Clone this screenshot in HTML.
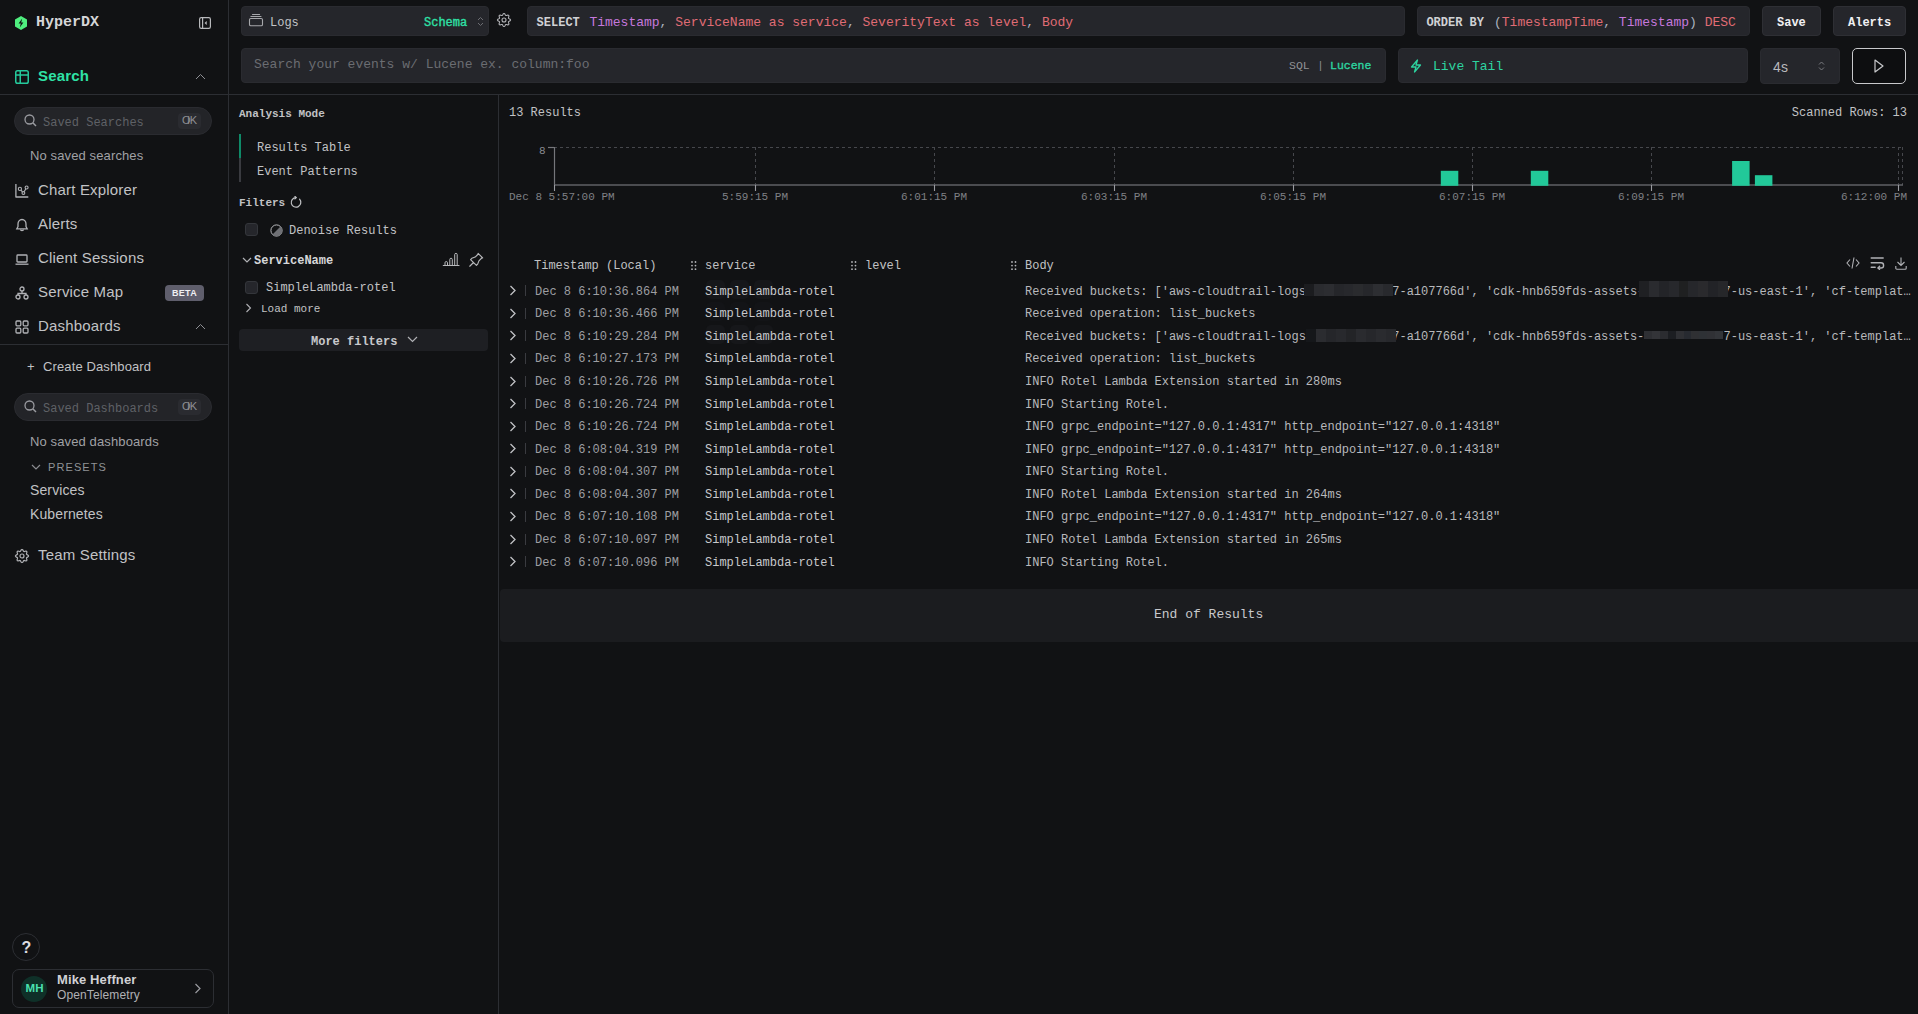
<!DOCTYPE html>
<html><head><meta charset="utf-8"><title>HyperDX</title>
<style>
html,body{margin:0;padding:0;width:1918px;height:1014px;overflow:hidden;background:#111214;font-family:"Liberation Sans",sans-serif}
</style></head><body>
<div style="position:absolute;left:228px;top:0px;width:1px;height:1014px;box-sizing:border-box;background:#2c2e33"></div>
<div style="position:absolute;left:0px;top:94px;width:228px;height:1px;box-sizing:border-box;background:#2c2e33"></div>
<svg style="position:absolute;left:15px;top:16px;" width="12" height="14" viewBox="0 0 12 14" fill="none"><path d="M6 0 L12 3.5 L12 10.5 L6 14 L0 10.5 L0 3.5 Z" fill="#4fef7f"/><path d="M7.2 2.6 L3.6 7.6 L5.8 7.6 L4.8 11.4 L8.4 6.4 L6.2 6.4 Z" fill="#111214"/></svg>
<div style="position:absolute;left:36.00px;top:7.75px;line-height:30px;font-family:'Liberation Mono', monospace;font-size:15px;font-weight:700;color:#d5d6d8;white-space:pre;">HyperDX</div>
<svg style="position:absolute;left:199px;top:17px;" width="12" height="12" viewBox="0 0 12 12" fill="none"><rect x="0.6" y="0.6" width="10.8" height="10.8" rx="1.6" stroke="#b8b9bc" stroke-width="1.2"/><path d="M3.6 1 V11" stroke="#b8b9bc" stroke-width="1.2"/><path d="M7.8 4.6 L6.4 6 L7.8 7.4" stroke="#b8b9bc" stroke-width="1.2"/></svg>
<svg style="position:absolute;left:15px;top:70px;" width="14" height="14" viewBox="0 0 14 14" fill="none"><rect x="0.75" y="0.75" width="12.5" height="12.5" rx="1.8" stroke="#25c99b" stroke-width="1.5"/><path d="M0.75 5 H13.25 M5.25 0.75 V13.25" stroke="#25c99b" stroke-width="1.5"/></svg>
<div style="position:absolute;left:38.00px;top:61.40px;line-height:30px;font-family:'Liberation Sans', sans-serif;font-size:15px;font-weight:700;color:#2fe2a6;white-space:pre;letter-spacing:0.18px;">Search</div>
<svg style="position:absolute;left:195px;top:72.5px;" width="11" height="7" viewBox="0 0 11 7" fill="none"><path d="M1 6 L5.5 1.5 L10 6" stroke="#8e8f94" stroke-width="1"/></svg>
<div style="position:absolute;left:14px;top:107px;width:198px;height:28px;box-sizing:border-box;background:#232428;border-radius:14px;border:1px solid #2a2b30"></div>
<svg style="position:absolute;left:24px;top:114px;" width="13" height="13" viewBox="0 0 13 13" fill="none"><circle cx="5.5" cy="5.5" r="4.5" stroke="#9a9ba0" stroke-width="1.3"/><path d="M8.8 8.8 L12 12" stroke="#9a9ba0" stroke-width="1.5"/></svg>
<div style="position:absolute;left:43.00px;top:110.90px;line-height:24px;font-family:'Liberation Mono', monospace;font-size:12px;font-weight:400;color:#5f6166;white-space:pre;">Saved Searches</div>
<div style="position:absolute;left:178px;top:113px;width:23px;height:16px;box-sizing:border-box;background:#2a2b30;border-radius:4px"></div>
<div style="position:absolute;left:182.00px;top:108.96px;line-height:22px;font-family:'Liberation Sans', sans-serif;font-size:11px;font-weight:400;color:#8e8f94;white-space:pre;letter-spacing:0.12px;"><span>O</span><span style="margin-left:-3.5px">i</span>K</div>
<div style="position:absolute;left:30.00px;top:142.68px;line-height:26px;font-family:'Liberation Sans', sans-serif;font-size:13px;font-weight:400;color:#a0a1a5;white-space:pre;letter-spacing:0.12px;">No saved searches</div>
<svg style="position:absolute;left:12px;top:182px;" width="20" height="18" viewBox="0 0 20 18" fill="none"><path d="M3.9 2 V15 H16.3" stroke="#b0b1b5" stroke-width="1.3" stroke-linejoin="round"/><path d="M7.9 6.9 L11.4 11 L14.6 5.5" stroke="#b0b1b5" stroke-width="1.2"/><circle cx="7.9" cy="6.9" r="1.6" fill="#111214" stroke="#b0b1b5" stroke-width="1.1"/><circle cx="11.4" cy="11" r="1.4" fill="#111214" stroke="#b0b1b5" stroke-width="1.1"/><circle cx="14.6" cy="5.5" r="1.5" fill="#111214" stroke="#b0b1b5" stroke-width="1.1"/></svg>
<div style="position:absolute;left:38.00px;top:175.40px;line-height:30px;font-family:'Liberation Sans', sans-serif;font-size:15px;font-weight:400;color:#c1c2c5;white-space:pre;letter-spacing:0.18px;">Chart Explorer</div>
<svg style="position:absolute;left:15px;top:218px;" width="14" height="14" viewBox="0 0 14 14" fill="none"><path d="M7 1.5 C4.5 1.5 3 3.5 3 6 V8.5 L1.8 10.8 H12.2 L11 8.5 V6 C11 3.5 9.5 1.5 7 1.5 Z" stroke="#b0b1b5" stroke-width="1.3"/><path d="M5.5 11.5 C5.5 13 8.5 13 8.5 11.5" stroke="#b0b1b5" stroke-width="1.3"/></svg>
<div style="position:absolute;left:38.00px;top:209.40px;line-height:30px;font-family:'Liberation Sans', sans-serif;font-size:15px;font-weight:400;color:#c1c2c5;white-space:pre;letter-spacing:0.18px;">Alerts</div>
<svg style="position:absolute;left:15px;top:252px;" width="14" height="14" viewBox="0 0 14 14" fill="none"><rect x="2" y="3" width="10" height="7" rx="0.8" stroke="#b0b1b5" stroke-width="1.3"/><path d="M0.5 12.2 H13.5" stroke="#b0b1b5" stroke-width="1.3"/></svg>
<div style="position:absolute;left:38.00px;top:243.40px;line-height:30px;font-family:'Liberation Sans', sans-serif;font-size:15px;font-weight:400;color:#c1c2c5;white-space:pre;letter-spacing:0.18px;">Client Sessions</div>
<svg style="position:absolute;left:15px;top:286px;" width="14" height="14" viewBox="0 0 14 14" fill="none"><circle cx="7" cy="3" r="2" stroke="#b0b1b5" stroke-width="1.3"/><circle cx="3" cy="11" r="2" stroke="#b0b1b5" stroke-width="1.3"/><circle cx="11" cy="11" r="2" stroke="#b0b1b5" stroke-width="1.3"/><path d="M7 5 V7.5 M3 9 V7.5 H11 V9" stroke="#b0b1b5" stroke-width="1.3"/></svg>
<div style="position:absolute;left:38.00px;top:277.40px;line-height:30px;font-family:'Liberation Sans', sans-serif;font-size:15px;font-weight:400;color:#c1c2c5;white-space:pre;letter-spacing:0.18px;">Service Map</div>
<div style="position:absolute;left:165px;top:285px;width:39px;height:16px;box-sizing:border-box;background:#5f5e6c;border-radius:4px"></div>
<div style="position:absolute;left:172.00px;top:284.24px;line-height:18px;font-family:'Liberation Sans', sans-serif;font-size:9px;font-weight:700;color:#f0f0f2;white-space:pre;letter-spacing:0.3px">BETA</div>
<svg style="position:absolute;left:15px;top:320px;" width="14" height="14" viewBox="0 0 14 14" fill="none"><rect x="1" y="1" width="4.8" height="4.8" rx="1" stroke="#b0b1b5" stroke-width="1.3"/><rect x="8.2" y="1" width="4.8" height="4.8" rx="1" stroke="#b0b1b5" stroke-width="1.3"/><rect x="1" y="8.2" width="4.8" height="4.8" rx="1" stroke="#b0b1b5" stroke-width="1.3"/><rect x="8.2" y="8.2" width="4.8" height="4.8" rx="1" stroke="#b0b1b5" stroke-width="1.3"/></svg>
<div style="position:absolute;left:38.00px;top:311.40px;line-height:30px;font-family:'Liberation Sans', sans-serif;font-size:15px;font-weight:400;color:#c1c2c5;white-space:pre;letter-spacing:0.18px;">Dashboards</div>
<svg style="position:absolute;left:195px;top:322.5px;" width="11" height="7" viewBox="0 0 11 7" fill="none"><path d="M1 6 L5.5 1.5 L10 6" stroke="#8e8f94" stroke-width="1"/></svg>
<div style="position:absolute;left:0px;top:344px;width:228px;height:1px;box-sizing:border-box;background:#2c2e33"></div>
<div style="position:absolute;left:27.00px;top:353.68px;line-height:26px;font-family:'Liberation Sans', sans-serif;font-size:13px;font-weight:400;color:#c1c2c5;white-space:pre;letter-spacing:0.12px;">+</div>
<div style="position:absolute;left:43.00px;top:353.68px;line-height:26px;font-family:'Liberation Sans', sans-serif;font-size:13px;font-weight:400;color:#c1c2c5;white-space:pre;letter-spacing:0.12px;">Create Dashboard</div>
<div style="position:absolute;left:14px;top:393px;width:198px;height:28px;box-sizing:border-box;background:#232428;border-radius:14px;border:1px solid #2a2b30"></div>
<svg style="position:absolute;left:24px;top:400px;" width="13" height="13" viewBox="0 0 13 13" fill="none"><circle cx="5.5" cy="5.5" r="4.5" stroke="#9a9ba0" stroke-width="1.3"/><path d="M8.8 8.8 L12 12" stroke="#9a9ba0" stroke-width="1.5"/></svg>
<div style="position:absolute;left:43.00px;top:396.90px;line-height:24px;font-family:'Liberation Mono', monospace;font-size:12px;font-weight:400;color:#5f6166;white-space:pre;">Saved Dashboards</div>
<div style="position:absolute;left:178px;top:399px;width:23px;height:16px;box-sizing:border-box;background:#2a2b30;border-radius:4px"></div>
<div style="position:absolute;left:182.00px;top:394.96px;line-height:22px;font-family:'Liberation Sans', sans-serif;font-size:11px;font-weight:400;color:#8e8f94;white-space:pre;letter-spacing:0.12px;"><span>O</span><span style="margin-left:-3.5px">i</span>K</div>
<div style="position:absolute;left:30.00px;top:428.68px;line-height:26px;font-family:'Liberation Sans', sans-serif;font-size:13px;font-weight:400;color:#a0a1a5;white-space:pre;letter-spacing:0.12px;">No saved dashboards</div>
<svg style="position:absolute;left:31px;top:464px;" width="10" height="7" viewBox="0 0 10 7" fill="none"><path d="M1 1 L5 5 L9 1" stroke="#8a8b90" stroke-width="1.2"/></svg>
<div style="position:absolute;left:48.00px;top:455.96px;line-height:22px;font-family:'Liberation Sans', sans-serif;font-size:11px;font-weight:400;color:#909296;white-space:pre;letter-spacing:1.1px">PRESETS</div>
<div style="position:absolute;left:30.00px;top:476.04px;line-height:28px;font-family:'Liberation Sans', sans-serif;font-size:14px;font-weight:400;color:#c1c2c5;white-space:pre;letter-spacing:0.12px;">Services</div>
<div style="position:absolute;left:30.00px;top:500.04px;line-height:28px;font-family:'Liberation Sans', sans-serif;font-size:14px;font-weight:400;color:#c1c2c5;white-space:pre;letter-spacing:0.12px;">Kubernetes</div>
<svg style="position:absolute;left:14px;top:548px;" width="16" height="16" viewBox="0 0 16 16" fill="none"><path d="M8.00 1.45 L8.42 1.58 L8.80 1.93 L9.11 2.41 L9.37 2.90 L9.60 3.30 L9.86 3.52 L10.20 3.55 L10.64 3.43 L11.17 3.26 L11.73 3.14 L12.24 3.16 L12.63 3.37 L12.84 3.76 L12.86 4.27 L12.74 4.83 L12.57 5.36 L12.45 5.80 L12.48 6.14 L12.70 6.40 L13.10 6.63 L13.59 6.89 L14.07 7.20 L14.42 7.58 L14.55 8.00 L14.42 8.42 L14.07 8.80 L13.59 9.11 L13.10 9.37 L12.70 9.60 L12.48 9.86 L12.45 10.20 L12.57 10.64 L12.74 11.17 L12.86 11.73 L12.84 12.24 L12.63 12.63 L12.24 12.84 L11.73 12.86 L11.17 12.74 L10.64 12.57 L10.20 12.45 L9.86 12.48 L9.60 12.70 L9.37 13.10 L9.11 13.59 L8.80 14.07 L8.42 14.42 L8.00 14.55 L7.58 14.42 L7.20 14.07 L6.89 13.59 L6.63 13.10 L6.40 12.70 L6.14 12.48 L5.80 12.45 L5.36 12.57 L4.83 12.74 L4.27 12.86 L3.76 12.84 L3.37 12.63 L3.16 12.24 L3.14 11.73 L3.26 11.17 L3.43 10.64 L3.55 10.20 L3.52 9.86 L3.30 9.60 L2.90 9.37 L2.41 9.11 L1.93 8.80 L1.58 8.42 L1.45 8.00 L1.58 7.58 L1.93 7.20 L2.41 6.89 L2.90 6.63 L3.30 6.40 L3.52 6.14 L3.55 5.80 L3.43 5.36 L3.26 4.83 L3.14 4.27 L3.16 3.76 L3.37 3.37 L3.76 3.16 L4.27 3.14 L4.83 3.26 L5.36 3.43 L5.80 3.55 L6.14 3.52 L6.40 3.30 L6.63 2.90 L6.89 2.41 L7.20 1.93 L7.58 1.58 Z" stroke="#b0b1b5" stroke-width="1.2" stroke-linejoin="round"/><circle cx="8" cy="8" r="2" stroke="#b0b1b5" stroke-width="1.2"/></svg>
<div style="position:absolute;left:38.00px;top:540.40px;line-height:30px;font-family:'Liberation Sans', sans-serif;font-size:15px;font-weight:400;color:#c1c2c5;white-space:pre;letter-spacing:0.18px;">Team Settings</div>
<div style="position:absolute;left:12px;top:933px;width:28px;height:28px;box-sizing:border-box;border:1px solid #2c2e33;border-radius:50%"></div>
<div style="position:absolute;left:21.50px;top:931.76px;line-height:32px;font-family:'Liberation Sans', sans-serif;font-size:16px;font-weight:700;color:#dcdde0;white-space:pre;letter-spacing:0.18px;">?</div>
<div style="position:absolute;left:12px;top:969px;width:202px;height:39px;box-sizing:border-box;border:1px solid #2c2e33;border-radius:7px"></div>
<div style="position:absolute;left:21px;top:976px;width:26px;height:26px;box-sizing:border-box;background:#0f3028;border-radius:50%"></div>
<div style="position:absolute;left:25.50px;top:977.14px;line-height:23px;font-family:'Liberation Sans', sans-serif;font-size:11.5px;font-weight:700;color:#4ae0b0;white-space:pre;letter-spacing:0.12px;">MH</div>
<div style="position:absolute;left:57.00px;top:966.68px;line-height:26px;font-family:'Liberation Sans', sans-serif;font-size:13px;font-weight:700;color:#d0d1d4;white-space:pre;letter-spacing:0.12px;">Mike Heffner</div>
<div style="position:absolute;left:57.00px;top:983.32px;line-height:24px;font-family:'Liberation Sans', sans-serif;font-size:12px;font-weight:400;color:#b0b1b5;white-space:pre;letter-spacing:0.12px;">OpenTelemetry</div>
<svg style="position:absolute;left:194px;top:983px;" width="8" height="11" viewBox="0 0 8 11" fill="none"><path d="M1.5 1 L6 5.5 L1.5 10" stroke="#9a9ba0" stroke-width="1.2"/></svg>
<div style="position:absolute;left:229px;top:94px;width:1689px;height:1px;box-sizing:border-box;background:#2c2e33"></div>
<div style="position:absolute;left:241px;top:6px;width:248px;height:30px;box-sizing:border-box;background:#25262b;border-radius:4px;border:1px solid #2a2b30"></div>
<svg style="position:absolute;left:244px;top:10px;" width="24" height="20" viewBox="0 0 24 20" fill="none"><rect x="5.5" y="8.5" width="13" height="7.2" rx="1.3" stroke="#a6a7ab" stroke-width="1.1"/><path d="M6.9 6.5 H17 M8.5 4.5 H15.6" stroke="#a6a7ab" stroke-width="1.1" stroke-linecap="round"/></svg>
<div style="position:absolute;left:270.00px;top:11.40px;line-height:24px;font-family:'Liberation Mono', monospace;font-size:12px;font-weight:400;color:#c1c2c5;white-space:pre;">Logs</div>
<div style="position:absolute;left:424.00px;top:11.40px;line-height:24px;font-family:'Liberation Mono', monospace;font-size:12px;font-weight:400;color:#2fe0a6;white-space:pre;-webkit-text-stroke:0.35px #2fe0a6">Schema</div>
<svg style="position:absolute;left:477px;top:15.5px;" width="7" height="11" viewBox="0 0 7 11" fill="none"><path d="M1 4 L3.5 1.5 L6 4 M1 7 L3.5 9.5 L6 7" stroke="#6c6d72" stroke-width="1"/></svg>
<svg style="position:absolute;left:496px;top:12px;" width="16" height="16" viewBox="0 0 16 16" fill="none"><path d="M8.00 1.45 L8.42 1.58 L8.80 1.93 L9.11 2.41 L9.37 2.90 L9.60 3.30 L9.86 3.52 L10.20 3.55 L10.64 3.43 L11.17 3.26 L11.73 3.14 L12.24 3.16 L12.63 3.37 L12.84 3.76 L12.86 4.27 L12.74 4.83 L12.57 5.36 L12.45 5.80 L12.48 6.14 L12.70 6.40 L13.10 6.63 L13.59 6.89 L14.07 7.20 L14.42 7.58 L14.55 8.00 L14.42 8.42 L14.07 8.80 L13.59 9.11 L13.10 9.37 L12.70 9.60 L12.48 9.86 L12.45 10.20 L12.57 10.64 L12.74 11.17 L12.86 11.73 L12.84 12.24 L12.63 12.63 L12.24 12.84 L11.73 12.86 L11.17 12.74 L10.64 12.57 L10.20 12.45 L9.86 12.48 L9.60 12.70 L9.37 13.10 L9.11 13.59 L8.80 14.07 L8.42 14.42 L8.00 14.55 L7.58 14.42 L7.20 14.07 L6.89 13.59 L6.63 13.10 L6.40 12.70 L6.14 12.48 L5.80 12.45 L5.36 12.57 L4.83 12.74 L4.27 12.86 L3.76 12.84 L3.37 12.63 L3.16 12.24 L3.14 11.73 L3.26 11.17 L3.43 10.64 L3.55 10.20 L3.52 9.86 L3.30 9.60 L2.90 9.37 L2.41 9.11 L1.93 8.80 L1.58 8.42 L1.45 8.00 L1.58 7.58 L1.93 7.20 L2.41 6.89 L2.90 6.63 L3.30 6.40 L3.52 6.14 L3.55 5.80 L3.43 5.36 L3.26 4.83 L3.14 4.27 L3.16 3.76 L3.37 3.37 L3.76 3.16 L4.27 3.14 L4.83 3.26 L5.36 3.43 L5.80 3.55 L6.14 3.52 L6.40 3.30 L6.63 2.90 L6.89 2.41 L7.20 1.93 L7.58 1.58 Z" stroke="#b0b1b5" stroke-width="1.1" stroke-linejoin="round"/><circle cx="8" cy="8" r="2" stroke="#b0b1b5" stroke-width="1.1"/></svg>
<div style="position:absolute;left:527px;top:6px;width:878px;height:30px;box-sizing:border-box;background:#25262b;border-radius:4px;border:1px solid #2a2b30"></div>
<div style="position:absolute;left:536.60px;top:11.20px;line-height:24px;font-family:'Liberation Mono', monospace;font-size:12px;font-weight:700;color:#d0d1d4;white-space:pre;">SELECT</div>
<div style="position:absolute;left:589.40px;top:10.05px;line-height:26px;font-family:'Liberation Mono', monospace;font-size:13px;font-weight:400;color:#c1c2c5;white-space:pre;"><span style="color:#c678dd">Timestamp</span><span style="color:#abb2bf">,</span> <span style="color:#e06c75">ServiceName as service</span><span style="color:#abb2bf">,</span> <span style="color:#e06c75">SeverityText as level</span><span style="color:#abb2bf">,</span> <span style="color:#e06c75">Body</span></div>
<div style="position:absolute;left:1417px;top:6px;width:333px;height:30px;box-sizing:border-box;background:#25262b;border-radius:4px;border:1px solid #2a2b30"></div>
<div style="position:absolute;left:1426.40px;top:11.20px;line-height:24px;font-family:'Liberation Mono', monospace;font-size:12px;font-weight:700;color:#d0d1d4;white-space:pre;">ORDER BY</div>
<div style="position:absolute;left:1494.00px;top:10.05px;line-height:26px;font-family:'Liberation Mono', monospace;font-size:13px;font-weight:400;color:#c1c2c5;white-space:pre;"><span style="color:#abb2bf">(</span><span style="color:#e06c75">TimestampTime</span><span style="color:#abb2bf">,</span> <span style="color:#c678dd">Timestamp</span><span style="color:#abb2bf">)</span> <span style="color:#e06c75">DESC</span></div>
<div style="position:absolute;left:1762px;top:6px;width:59px;height:30px;box-sizing:border-box;background:#25262b;border-radius:4px;border:1px solid #2e2f34"></div>
<div style="position:absolute;left:1777.00px;top:10.90px;line-height:24px;font-family:'Liberation Mono', monospace;font-size:12px;font-weight:700;color:#f0f0f2;white-space:pre;">Save</div>
<div style="position:absolute;left:1833px;top:6px;width:73px;height:30px;box-sizing:border-box;background:#25262b;border-radius:4px;border:1px solid #2e2f34"></div>
<div style="position:absolute;left:1848.00px;top:10.90px;line-height:24px;font-family:'Liberation Mono', monospace;font-size:12px;font-weight:700;color:#f0f0f2;white-space:pre;">Alerts</div>
<div style="position:absolute;left:241px;top:48px;width:1145px;height:35px;box-sizing:border-box;background:#25262b;border-radius:4px;border:1px solid #2a2b30"></div>
<div style="position:absolute;left:254.00px;top:52.35px;line-height:26px;font-family:'Liberation Mono', monospace;font-size:13px;font-weight:400;color:#6b6d72;white-space:pre;">Search your events w/ Lucene ex. column:foo</div>
<div style="position:absolute;left:1289.00px;top:54.17px;line-height:23px;font-family:'Liberation Mono', monospace;font-size:11.5px;font-weight:400;color:#909296;white-space:pre;">SQL</div>
<div style="position:absolute;left:1317.00px;top:53.67px;line-height:23px;font-family:'Liberation Mono', monospace;font-size:11.5px;font-weight:400;color:#8a8b90;white-space:pre;">|</div>
<div style="position:absolute;left:1330.00px;top:54.17px;line-height:23px;font-family:'Liberation Mono', monospace;font-size:11.5px;font-weight:400;color:#2dd4a0;white-space:pre;-webkit-text-stroke:0.35px #2dd4a0">Lucene</div>
<div style="position:absolute;left:1398px;top:48px;width:350px;height:35px;box-sizing:border-box;background:#25262b;border-radius:4px;border:1px solid #2a2b30"></div>
<svg style="position:absolute;left:1410px;top:59px;" width="12" height="14" viewBox="0 0 12 14" fill="none"><path d="M7.5 1 L1.5 8 H6 L4.5 13 L10.5 6 H6 Z" stroke="#2dd4a0" stroke-width="1.3" stroke-linejoin="round"/></svg>
<div style="position:absolute;left:1433.00px;top:53.85px;line-height:26px;font-family:'Liberation Mono', monospace;font-size:13px;font-weight:400;color:#2dd4a0;white-space:pre;">Live Tail</div>
<div style="position:absolute;left:1760px;top:48px;width:80px;height:36px;box-sizing:border-box;background:#25262b;border-radius:4px;border:1px solid #2a2b30"></div>
<div style="position:absolute;left:1773.00px;top:53.04px;line-height:28px;font-family:'Liberation Sans', sans-serif;font-size:14px;font-weight:400;color:#b8b9bc;white-space:pre;letter-spacing:0.12px;">4s</div>
<svg style="position:absolute;left:1818px;top:60px;" width="8" height="12" viewBox="0 0 8 12" fill="none"><path d="M1 4.5 L3.5 2 L6 4.5 M1 7.5 L3.5 10 L6 7.5" stroke="#7a7b80" stroke-width="1"/></svg>
<div style="position:absolute;left:1852px;top:48px;width:54px;height:36px;box-sizing:border-box;background:#0d0e10;border-radius:5px;border:1px solid #c8c9cc"></div>
<svg style="position:absolute;left:1874px;top:59px;" width="10" height="14" viewBox="0 0 10 14" fill="none"><path d="M1 1 L9 7 L1 13 Z" stroke="#c8c9cc" stroke-width="1.2" stroke-linejoin="round"/></svg>
<div style="position:absolute;left:498px;top:95px;width:1px;height:919px;box-sizing:border-box;background:#2c2e33"></div>
<div style="position:absolute;left:239.00px;top:102.95px;line-height:22px;font-family:'Liberation Mono', monospace;font-size:11px;font-weight:700;color:#c1c2c5;white-space:pre;">Analysis Mode</div>
<div style="position:absolute;left:239px;top:134px;width:2px;height:24px;box-sizing:border-box;background:#0f8a68"></div>
<div style="position:absolute;left:239px;top:158px;width:2px;height:24px;box-sizing:border-box;background:#3a3b40"></div>
<div style="position:absolute;left:257.00px;top:136.40px;line-height:24px;font-family:'Liberation Mono', monospace;font-size:12px;font-weight:400;color:#c1c2c5;white-space:pre;">Results Table</div>
<div style="position:absolute;left:257.00px;top:160.40px;line-height:24px;font-family:'Liberation Mono', monospace;font-size:12px;font-weight:400;color:#c1c2c5;white-space:pre;">Event Patterns</div>
<div style="position:absolute;left:239.00px;top:191.95px;line-height:22px;font-family:'Liberation Mono', monospace;font-size:11px;font-weight:700;color:#c1c2c5;white-space:pre;">Filters</div>
<svg style="position:absolute;left:290px;top:196px;" width="13" height="13" viewBox="0 0 13 13" fill="none"><path d="M5.9 1.6 A4.8 4.8 0 1 0 9.6 3.2" stroke="#c1c2c5" stroke-width="1.2" stroke-linecap="round"/><path d="M4.9 0.3 L6.3 1.6 L4.9 2.9" stroke="#c1c2c5" stroke-width="1.2" stroke-linecap="round" stroke-linejoin="round"/></svg>
<div style="position:absolute;left:245px;top:223px;width:13px;height:13px;box-sizing:border-box;background:#25262b;border:1px solid #34363b;border-radius:3px"></div>
<svg style="position:absolute;left:270px;top:224px;" width="13" height="13" viewBox="0 0 13 13" fill="none"><circle cx="6.5" cy="6.5" r="5.6" stroke="#b8b9bc" stroke-width="1"/><path d="M10.5 2.5 L2.5 10.5 A5.6 5.6 0 0 0 10.5 2.5 Z" fill="#6f7075"/></svg>
<div style="position:absolute;left:289.00px;top:219.40px;line-height:24px;font-family:'Liberation Mono', monospace;font-size:12px;font-weight:400;color:#c1c2c5;white-space:pre;">Denoise Results</div>
<svg style="position:absolute;left:242px;top:257px;" width="10" height="7" viewBox="0 0 10 7" fill="none"><path d="M1 1 L5 5 L9 1" stroke="#b0b1b5" stroke-width="1.2"/></svg>
<div style="position:absolute;left:254.00px;top:249.40px;line-height:24px;font-family:'Liberation Mono', monospace;font-size:12px;font-weight:700;color:#d5d6d8;white-space:pre;">ServiceName</div>
<svg style="position:absolute;left:440px;top:250px;" width="22" height="20" viewBox="0 0 22 20" fill="none"><path d="M3.3 15.5 H19" stroke="#b8b9bc" stroke-width="1.2" stroke-linecap="round"/><path d="M5 15.5 V12.8 A1.25 1.25 0 0 1 7.5 12.8 V15.5 M9.8 15.5 V9.5 A1.25 1.25 0 0 1 12.3 9.5 V15.5 M14.7 15.5 V4.6 A1.25 1.25 0 0 1 17.2 4.6 V15.5" stroke="#b8b9bc" stroke-width="1"/></svg>
<svg style="position:absolute;left:465.5px;top:249.5px;" width="20" height="20" viewBox="0 0 24 24" fill="none"><path d="M15 4.5l-4 4l-4 1.5l-1.5 1.5l7 7l1.5 -1.5l1.5 -4l4 -4 M9 15l-4.5 4.5 M14.5 4l5.5 5.5" stroke="#b8b9bc" stroke-width="1.35" stroke-linecap="round" stroke-linejoin="round"/></svg>
<div style="position:absolute;left:245px;top:281px;width:13px;height:13px;box-sizing:border-box;background:#25262b;border:1px solid #34363b;border-radius:3px"></div>
<div style="position:absolute;left:266.00px;top:276.40px;line-height:24px;font-family:'Liberation Mono', monospace;font-size:12px;font-weight:400;color:#c1c2c5;white-space:pre;">SimpleLambda-rotel</div>
<svg style="position:absolute;left:245px;top:303px;" width="7" height="10" viewBox="0 0 7 10" fill="none"><path d="M1.5 1 L5.5 5 L1.5 9" stroke="#b0b1b5" stroke-width="1.1"/></svg>
<div style="position:absolute;left:261.00px;top:297.95px;line-height:22px;font-family:'Liberation Mono', monospace;font-size:11px;font-weight:400;color:#c1c2c5;white-space:pre;">Load more</div>
<div style="position:absolute;left:239px;top:329px;width:249px;height:22px;box-sizing:border-box;background:#1e1f23;border-radius:4px"></div>
<div style="position:absolute;left:311.00px;top:330.40px;line-height:24px;font-family:'Liberation Mono', monospace;font-size:12px;font-weight:700;color:#c8c9cc;white-space:pre;">More filters</div>
<svg style="position:absolute;left:407px;top:336px;" width="11" height="7" viewBox="0 0 11 7" fill="none"><path d="M1 1 L5.5 5.5 L10 1" stroke="#b0b1b5" stroke-width="1.2"/></svg>
<div style="position:absolute;left:509.00px;top:101.40px;line-height:24px;font-family:'Liberation Mono', monospace;font-size:12px;font-weight:400;color:#c1c2c5;white-space:pre;">13 Results</div>
<div style="position:absolute;right:11.00px;top:101.40px;line-height:24px;font-family:'Liberation Mono', monospace;font-size:12px;font-weight:400;color:#c1c2c5;white-space:pre;">Scanned Rows: 13</div>
<svg style="position:absolute;left:0px;top:0px;" width="1918" height="214" viewBox="0 0 1918 214" fill="none"><path d="M554 147.5 H1902" stroke="#46474c" stroke-dasharray="3 3"/><path d="M755.5 147 V185" stroke="#46474c" stroke-dasharray="3 3"/><path d="M934.5 147 V185" stroke="#46474c" stroke-dasharray="3 3"/><path d="M1114.5 147 V185" stroke="#46474c" stroke-dasharray="3 3"/><path d="M1293.5 147 V185" stroke="#46474c" stroke-dasharray="3 3"/><path d="M1472.5 147 V185" stroke="#46474c" stroke-dasharray="3 3"/><path d="M1651.5 147 V185" stroke="#46474c" stroke-dasharray="3 3"/><path d="M1898.5 147 V185" stroke="#46474c" stroke-dasharray="3 3"/><path d="M1902.5 147 V185" stroke="#46474c" stroke-dasharray="3 3"/><path d="M554 185 H1903" stroke="#5f6064" stroke-width="1.7"/><path d="M554.5 147 V185" stroke="#75767a" stroke-width="1.2"/><path d="M548 147.5 H554" stroke="#75767a" stroke-width="1.2"/><path d="M554.5 185 V191" stroke="#9a9ba0" stroke-width="1.1"/><path d="M755.5 185 V191" stroke="#9a9ba0" stroke-width="1.1"/><path d="M934.5 185 V191" stroke="#9a9ba0" stroke-width="1.1"/><path d="M1114.5 185 V191" stroke="#9a9ba0" stroke-width="1.1"/><path d="M1293.5 185 V191" stroke="#9a9ba0" stroke-width="1.1"/><path d="M1472.5 185 V191" stroke="#9a9ba0" stroke-width="1.1"/><path d="M1651.5 185 V191" stroke="#9a9ba0" stroke-width="1.1"/><path d="M1898.5 185 V191" stroke="#9a9ba0" stroke-width="1.1"/><rect x="1440.8" y="170.8" width="17.5" height="15.0" fill="#22c899"/><rect x="1530.8" y="170.8" width="17.5" height="15.0" fill="#22c899"/><rect x="1732.1" y="161.0" width="17.5" height="24.8" fill="#22c899"/><rect x="1754.9" y="175.2" width="17.5" height="10.6" fill="#22c899"/></svg>
<div style="position:absolute;left:539.00px;top:139.95px;line-height:22px;font-family:'Liberation Mono', monospace;font-size:11px;font-weight:400;color:#8a8b90;white-space:pre;">8</div>
<div style="position:absolute;left:509.00px;top:186.15px;line-height:22px;font-family:'Liberation Mono', monospace;font-size:11px;font-weight:400;color:#7f8085;white-space:pre;">Dec 8 5:57:00 PM</div>
<div style="position:absolute;left:722.00px;top:186.15px;line-height:22px;font-family:'Liberation Mono', monospace;font-size:11px;font-weight:400;color:#7f8085;white-space:pre;">5:59:15 PM</div>
<div style="position:absolute;left:901.00px;top:186.15px;line-height:22px;font-family:'Liberation Mono', monospace;font-size:11px;font-weight:400;color:#7f8085;white-space:pre;">6:01:15 PM</div>
<div style="position:absolute;left:1081.00px;top:186.15px;line-height:22px;font-family:'Liberation Mono', monospace;font-size:11px;font-weight:400;color:#7f8085;white-space:pre;">6:03:15 PM</div>
<div style="position:absolute;left:1260.00px;top:186.15px;line-height:22px;font-family:'Liberation Mono', monospace;font-size:11px;font-weight:400;color:#7f8085;white-space:pre;">6:05:15 PM</div>
<div style="position:absolute;left:1439.00px;top:186.15px;line-height:22px;font-family:'Liberation Mono', monospace;font-size:11px;font-weight:400;color:#7f8085;white-space:pre;">6:07:15 PM</div>
<div style="position:absolute;left:1618.00px;top:186.15px;line-height:22px;font-family:'Liberation Mono', monospace;font-size:11px;font-weight:400;color:#7f8085;white-space:pre;">6:09:15 PM</div>
<div style="position:absolute;left:1841.00px;top:186.15px;line-height:22px;font-family:'Liberation Mono', monospace;font-size:11px;font-weight:400;color:#7f8085;white-space:pre;">6:12:00 PM</div>
<div style="position:absolute;left:534.00px;top:254.40px;line-height:24px;font-family:'Liberation Mono', monospace;font-size:12px;font-weight:400;color:#c1c2c5;white-space:pre;">Timestamp (Local)</div>
<svg style="position:absolute;left:691px;top:261px;" width="6" height="9" viewBox="0 0 6 9" fill="none"><circle cx="1.0" cy="1.0" r="0.9" fill="#b0b1b5"/><circle cx="1.0" cy="4.6" r="0.9" fill="#b0b1b5"/><circle cx="1.0" cy="8.2" r="0.9" fill="#b0b1b5"/><circle cx="4.5" cy="1.0" r="0.9" fill="#b0b1b5"/><circle cx="4.5" cy="4.6" r="0.9" fill="#b0b1b5"/><circle cx="4.5" cy="8.2" r="0.9" fill="#b0b1b5"/></svg>
<div style="position:absolute;left:705.00px;top:254.40px;line-height:24px;font-family:'Liberation Mono', monospace;font-size:12px;font-weight:400;color:#c1c2c5;white-space:pre;">service</div>
<svg style="position:absolute;left:851px;top:261px;" width="6" height="9" viewBox="0 0 6 9" fill="none"><circle cx="1.0" cy="1.0" r="0.9" fill="#b0b1b5"/><circle cx="1.0" cy="4.6" r="0.9" fill="#b0b1b5"/><circle cx="1.0" cy="8.2" r="0.9" fill="#b0b1b5"/><circle cx="4.5" cy="1.0" r="0.9" fill="#b0b1b5"/><circle cx="4.5" cy="4.6" r="0.9" fill="#b0b1b5"/><circle cx="4.5" cy="8.2" r="0.9" fill="#b0b1b5"/></svg>
<div style="position:absolute;left:865.00px;top:254.40px;line-height:24px;font-family:'Liberation Mono', monospace;font-size:12px;font-weight:400;color:#c1c2c5;white-space:pre;">level</div>
<svg style="position:absolute;left:1011px;top:261px;" width="6" height="9" viewBox="0 0 6 9" fill="none"><circle cx="1.0" cy="1.0" r="0.9" fill="#b0b1b5"/><circle cx="1.0" cy="4.6" r="0.9" fill="#b0b1b5"/><circle cx="1.0" cy="8.2" r="0.9" fill="#b0b1b5"/><circle cx="4.5" cy="1.0" r="0.9" fill="#b0b1b5"/><circle cx="4.5" cy="4.6" r="0.9" fill="#b0b1b5"/><circle cx="4.5" cy="8.2" r="0.9" fill="#b0b1b5"/></svg>
<div style="position:absolute;left:1025.00px;top:254.40px;line-height:24px;font-family:'Liberation Mono', monospace;font-size:12px;font-weight:400;color:#c1c2c5;white-space:pre;">Body</div>
<svg style="position:absolute;left:1846px;top:257px;" width="14" height="12" viewBox="0 0 14 12" fill="none"><path d="M4 2.5 L1 6 L4 9.5 M10 2.5 L13 6 L10 9.5 M8 0.5 L6 11.5" stroke="#b0b1b5" stroke-width="1.1"/></svg>
<svg style="position:absolute;left:1870px;top:256px;" width="15" height="14" viewBox="0 0 15 14" fill="none"><path d="M1.2 2 H13.2 M1.2 6.8 H11 A2.6 2.6 0 0 1 11 12 H8.2 M1.2 11.2 H5.2" stroke="#b0b1b5" stroke-width="1.4" stroke-linecap="round"/><path d="M9.6 10.3 L8 12 L9.6 13.4" stroke="#b0b1b5" stroke-width="1.3" stroke-linecap="round" stroke-linejoin="round"/></svg>
<svg style="position:absolute;left:1895px;top:257px;" width="12" height="13" viewBox="0 0 12 13" fill="none"><path d="M6 0.5 V8.5 M2.5 5 L6 8.5 L9.5 5 M0.8 9 V11.2 A1 1 0 0 0 1.8 12.2 H10.2 A1 1 0 0 0 11.2 11.2 V9" stroke="#b0b1b5" stroke-width="1.1"/></svg>
<div style="position:absolute;left:705.5px;top:279.5px;width:19px;height:19px;box-sizing:border-box;background:#16171a;border-radius:5px"></div>
<div style="position:absolute;left:729.5px;top:279.5px;width:19px;height:19px;box-sizing:border-box;background:#16171a;border-radius:5px"></div>
<div style="position:absolute;left:753.5px;top:279.5px;width:19px;height:19px;box-sizing:border-box;background:#16171a;border-radius:5px"></div>
<div style="position:absolute;left:705.5px;top:302px;width:19px;height:19px;box-sizing:border-box;background:#131417;border-radius:5px"></div>
<div style="position:absolute;left:729.5px;top:302px;width:19px;height:19px;box-sizing:border-box;background:#131417;border-radius:5px"></div>
<div style="position:absolute;left:753.5px;top:302px;width:19px;height:19px;box-sizing:border-box;background:#131417;border-radius:5px"></div>
<div style="position:absolute;left:705.5px;top:324.5px;width:19px;height:19px;box-sizing:border-box;background:#16171a;border-radius:5px"></div>
<div style="position:absolute;left:729.5px;top:324.5px;width:19px;height:19px;box-sizing:border-box;background:#16171a;border-radius:5px"></div>
<div style="position:absolute;left:753.5px;top:324.5px;width:19px;height:19px;box-sizing:border-box;background:#16171a;border-radius:5px"></div>
<svg style="position:absolute;left:509px;top:285px;" width="8" height="11" viewBox="0 0 8 11" fill="none"><path d="M1.5 1 L6 5.5 L1.5 10" stroke="#c1c2c5" stroke-width="1.3"/></svg>
<div style="position:absolute;left:525px;top:285px;width:1px;height:11px;box-sizing:border-box;background:#3a3b40"></div>
<div style="position:absolute;left:535.00px;top:279.60px;line-height:24px;font-family:'Liberation Mono', monospace;font-size:12px;font-weight:400;color:#9d9ea2;white-space:pre;">Dec 8 6:10:36.864 PM</div>
<div style="position:absolute;left:705.00px;top:279.60px;line-height:24px;font-family:'Liberation Mono', monospace;font-size:12px;font-weight:400;color:#c8c9cc;white-space:pre;">SimpleLambda-rotel</div>
<div style="position:absolute;left:1025.00px;top:279.60px;line-height:24px;font-family:'Liberation Mono', monospace;font-size:12px;font-weight:400;color:#b8b9bc;white-space:pre;">Received buckets: [&#x27;aws-cloudtrail-logs-           7-a107766d&#x27;, &#x27;cdk-hnb659fds-assets-           7-us-east-1&#x27;, &#x27;cf-templat…</div>
<svg style="position:absolute;left:509px;top:308px;" width="8" height="11" viewBox="0 0 8 11" fill="none"><path d="M1.5 1 L6 5.5 L1.5 10" stroke="#c1c2c5" stroke-width="1.3"/></svg>
<div style="position:absolute;left:525px;top:308px;width:1px;height:11px;box-sizing:border-box;background:#3a3b40"></div>
<div style="position:absolute;left:535.00px;top:302.18px;line-height:24px;font-family:'Liberation Mono', monospace;font-size:12px;font-weight:400;color:#9d9ea2;white-space:pre;">Dec 8 6:10:36.466 PM</div>
<div style="position:absolute;left:705.00px;top:302.18px;line-height:24px;font-family:'Liberation Mono', monospace;font-size:12px;font-weight:400;color:#c8c9cc;white-space:pre;">SimpleLambda-rotel</div>
<div style="position:absolute;left:1025.00px;top:302.18px;line-height:24px;font-family:'Liberation Mono', monospace;font-size:12px;font-weight:400;color:#b8b9bc;white-space:pre;">Received operation: list_buckets</div>
<svg style="position:absolute;left:509px;top:330px;" width="8" height="11" viewBox="0 0 8 11" fill="none"><path d="M1.5 1 L6 5.5 L1.5 10" stroke="#c1c2c5" stroke-width="1.3"/></svg>
<div style="position:absolute;left:525px;top:330px;width:1px;height:11px;box-sizing:border-box;background:#3a3b40"></div>
<div style="position:absolute;left:535.00px;top:324.76px;line-height:24px;font-family:'Liberation Mono', monospace;font-size:12px;font-weight:400;color:#9d9ea2;white-space:pre;">Dec 8 6:10:29.284 PM</div>
<div style="position:absolute;left:705.00px;top:324.76px;line-height:24px;font-family:'Liberation Mono', monospace;font-size:12px;font-weight:400;color:#c8c9cc;white-space:pre;">SimpleLambda-rotel</div>
<div style="position:absolute;left:1025.00px;top:324.76px;line-height:24px;font-family:'Liberation Mono', monospace;font-size:12px;font-weight:400;color:#b8b9bc;white-space:pre;">Received buckets: [&#x27;aws-cloudtrail-logs-           7-a107766d&#x27;, &#x27;cdk-hnb659fds-assets-           7-us-east-1&#x27;, &#x27;cf-templat…</div>
<svg style="position:absolute;left:509px;top:353px;" width="8" height="11" viewBox="0 0 8 11" fill="none"><path d="M1.5 1 L6 5.5 L1.5 10" stroke="#c1c2c5" stroke-width="1.3"/></svg>
<div style="position:absolute;left:525px;top:353px;width:1px;height:11px;box-sizing:border-box;background:#3a3b40"></div>
<div style="position:absolute;left:535.00px;top:347.34px;line-height:24px;font-family:'Liberation Mono', monospace;font-size:12px;font-weight:400;color:#9d9ea2;white-space:pre;">Dec 8 6:10:27.173 PM</div>
<div style="position:absolute;left:705.00px;top:347.34px;line-height:24px;font-family:'Liberation Mono', monospace;font-size:12px;font-weight:400;color:#c8c9cc;white-space:pre;">SimpleLambda-rotel</div>
<div style="position:absolute;left:1025.00px;top:347.34px;line-height:24px;font-family:'Liberation Mono', monospace;font-size:12px;font-weight:400;color:#b8b9bc;white-space:pre;">Received operation: list_buckets</div>
<svg style="position:absolute;left:509px;top:376px;" width="8" height="11" viewBox="0 0 8 11" fill="none"><path d="M1.5 1 L6 5.5 L1.5 10" stroke="#c1c2c5" stroke-width="1.3"/></svg>
<div style="position:absolute;left:525px;top:376px;width:1px;height:11px;box-sizing:border-box;background:#3a3b40"></div>
<div style="position:absolute;left:535.00px;top:369.92px;line-height:24px;font-family:'Liberation Mono', monospace;font-size:12px;font-weight:400;color:#9d9ea2;white-space:pre;">Dec 8 6:10:26.726 PM</div>
<div style="position:absolute;left:705.00px;top:369.92px;line-height:24px;font-family:'Liberation Mono', monospace;font-size:12px;font-weight:400;color:#c8c9cc;white-space:pre;">SimpleLambda-rotel</div>
<div style="position:absolute;left:1025.00px;top:369.92px;line-height:24px;font-family:'Liberation Mono', monospace;font-size:12px;font-weight:400;color:#b8b9bc;white-space:pre;">INFO Rotel Lambda Extension started in 280ms</div>
<svg style="position:absolute;left:509px;top:398px;" width="8" height="11" viewBox="0 0 8 11" fill="none"><path d="M1.5 1 L6 5.5 L1.5 10" stroke="#c1c2c5" stroke-width="1.3"/></svg>
<div style="position:absolute;left:525px;top:398px;width:1px;height:11px;box-sizing:border-box;background:#3a3b40"></div>
<div style="position:absolute;left:535.00px;top:392.50px;line-height:24px;font-family:'Liberation Mono', monospace;font-size:12px;font-weight:400;color:#9d9ea2;white-space:pre;">Dec 8 6:10:26.724 PM</div>
<div style="position:absolute;left:705.00px;top:392.50px;line-height:24px;font-family:'Liberation Mono', monospace;font-size:12px;font-weight:400;color:#c8c9cc;white-space:pre;">SimpleLambda-rotel</div>
<div style="position:absolute;left:1025.00px;top:392.50px;line-height:24px;font-family:'Liberation Mono', monospace;font-size:12px;font-weight:400;color:#b8b9bc;white-space:pre;">INFO Starting Rotel.</div>
<svg style="position:absolute;left:509px;top:421px;" width="8" height="11" viewBox="0 0 8 11" fill="none"><path d="M1.5 1 L6 5.5 L1.5 10" stroke="#c1c2c5" stroke-width="1.3"/></svg>
<div style="position:absolute;left:525px;top:421px;width:1px;height:11px;box-sizing:border-box;background:#3a3b40"></div>
<div style="position:absolute;left:535.00px;top:415.08px;line-height:24px;font-family:'Liberation Mono', monospace;font-size:12px;font-weight:400;color:#9d9ea2;white-space:pre;">Dec 8 6:10:26.724 PM</div>
<div style="position:absolute;left:705.00px;top:415.08px;line-height:24px;font-family:'Liberation Mono', monospace;font-size:12px;font-weight:400;color:#c8c9cc;white-space:pre;">SimpleLambda-rotel</div>
<div style="position:absolute;left:1025.00px;top:415.08px;line-height:24px;font-family:'Liberation Mono', monospace;font-size:12px;font-weight:400;color:#b8b9bc;white-space:pre;">INFO grpc_endpoint=&quot;127.0.0.1:4317&quot; http_endpoint=&quot;127.0.0.1:4318&quot;</div>
<svg style="position:absolute;left:509px;top:443px;" width="8" height="11" viewBox="0 0 8 11" fill="none"><path d="M1.5 1 L6 5.5 L1.5 10" stroke="#c1c2c5" stroke-width="1.3"/></svg>
<div style="position:absolute;left:525px;top:443px;width:1px;height:11px;box-sizing:border-box;background:#3a3b40"></div>
<div style="position:absolute;left:535.00px;top:437.66px;line-height:24px;font-family:'Liberation Mono', monospace;font-size:12px;font-weight:400;color:#9d9ea2;white-space:pre;">Dec 8 6:08:04.319 PM</div>
<div style="position:absolute;left:705.00px;top:437.66px;line-height:24px;font-family:'Liberation Mono', monospace;font-size:12px;font-weight:400;color:#c8c9cc;white-space:pre;">SimpleLambda-rotel</div>
<div style="position:absolute;left:1025.00px;top:437.66px;line-height:24px;font-family:'Liberation Mono', monospace;font-size:12px;font-weight:400;color:#b8b9bc;white-space:pre;">INFO grpc_endpoint=&quot;127.0.0.1:4317&quot; http_endpoint=&quot;127.0.0.1:4318&quot;</div>
<svg style="position:absolute;left:509px;top:466px;" width="8" height="11" viewBox="0 0 8 11" fill="none"><path d="M1.5 1 L6 5.5 L1.5 10" stroke="#c1c2c5" stroke-width="1.3"/></svg>
<div style="position:absolute;left:525px;top:466px;width:1px;height:11px;box-sizing:border-box;background:#3a3b40"></div>
<div style="position:absolute;left:535.00px;top:460.24px;line-height:24px;font-family:'Liberation Mono', monospace;font-size:12px;font-weight:400;color:#9d9ea2;white-space:pre;">Dec 8 6:08:04.307 PM</div>
<div style="position:absolute;left:705.00px;top:460.24px;line-height:24px;font-family:'Liberation Mono', monospace;font-size:12px;font-weight:400;color:#c8c9cc;white-space:pre;">SimpleLambda-rotel</div>
<div style="position:absolute;left:1025.00px;top:460.24px;line-height:24px;font-family:'Liberation Mono', monospace;font-size:12px;font-weight:400;color:#b8b9bc;white-space:pre;">INFO Starting Rotel.</div>
<svg style="position:absolute;left:509px;top:488px;" width="8" height="11" viewBox="0 0 8 11" fill="none"><path d="M1.5 1 L6 5.5 L1.5 10" stroke="#c1c2c5" stroke-width="1.3"/></svg>
<div style="position:absolute;left:525px;top:488px;width:1px;height:11px;box-sizing:border-box;background:#3a3b40"></div>
<div style="position:absolute;left:535.00px;top:482.82px;line-height:24px;font-family:'Liberation Mono', monospace;font-size:12px;font-weight:400;color:#9d9ea2;white-space:pre;">Dec 8 6:08:04.307 PM</div>
<div style="position:absolute;left:705.00px;top:482.82px;line-height:24px;font-family:'Liberation Mono', monospace;font-size:12px;font-weight:400;color:#c8c9cc;white-space:pre;">SimpleLambda-rotel</div>
<div style="position:absolute;left:1025.00px;top:482.82px;line-height:24px;font-family:'Liberation Mono', monospace;font-size:12px;font-weight:400;color:#b8b9bc;white-space:pre;">INFO Rotel Lambda Extension started in 264ms</div>
<svg style="position:absolute;left:509px;top:511px;" width="8" height="11" viewBox="0 0 8 11" fill="none"><path d="M1.5 1 L6 5.5 L1.5 10" stroke="#c1c2c5" stroke-width="1.3"/></svg>
<div style="position:absolute;left:525px;top:511px;width:1px;height:11px;box-sizing:border-box;background:#3a3b40"></div>
<div style="position:absolute;left:535.00px;top:505.40px;line-height:24px;font-family:'Liberation Mono', monospace;font-size:12px;font-weight:400;color:#9d9ea2;white-space:pre;">Dec 8 6:07:10.108 PM</div>
<div style="position:absolute;left:705.00px;top:505.40px;line-height:24px;font-family:'Liberation Mono', monospace;font-size:12px;font-weight:400;color:#c8c9cc;white-space:pre;">SimpleLambda-rotel</div>
<div style="position:absolute;left:1025.00px;top:505.40px;line-height:24px;font-family:'Liberation Mono', monospace;font-size:12px;font-weight:400;color:#b8b9bc;white-space:pre;">INFO grpc_endpoint=&quot;127.0.0.1:4317&quot; http_endpoint=&quot;127.0.0.1:4318&quot;</div>
<svg style="position:absolute;left:509px;top:534px;" width="8" height="11" viewBox="0 0 8 11" fill="none"><path d="M1.5 1 L6 5.5 L1.5 10" stroke="#c1c2c5" stroke-width="1.3"/></svg>
<div style="position:absolute;left:525px;top:534px;width:1px;height:11px;box-sizing:border-box;background:#3a3b40"></div>
<div style="position:absolute;left:535.00px;top:527.98px;line-height:24px;font-family:'Liberation Mono', monospace;font-size:12px;font-weight:400;color:#9d9ea2;white-space:pre;">Dec 8 6:07:10.097 PM</div>
<div style="position:absolute;left:705.00px;top:527.98px;line-height:24px;font-family:'Liberation Mono', monospace;font-size:12px;font-weight:400;color:#c8c9cc;white-space:pre;">SimpleLambda-rotel</div>
<div style="position:absolute;left:1025.00px;top:527.98px;line-height:24px;font-family:'Liberation Mono', monospace;font-size:12px;font-weight:400;color:#b8b9bc;white-space:pre;">INFO Rotel Lambda Extension started in 265ms</div>
<svg style="position:absolute;left:509px;top:556px;" width="8" height="11" viewBox="0 0 8 11" fill="none"><path d="M1.5 1 L6 5.5 L1.5 10" stroke="#c1c2c5" stroke-width="1.3"/></svg>
<div style="position:absolute;left:525px;top:556px;width:1px;height:11px;box-sizing:border-box;background:#3a3b40"></div>
<div style="position:absolute;left:535.00px;top:550.56px;line-height:24px;font-family:'Liberation Mono', monospace;font-size:12px;font-weight:400;color:#9d9ea2;white-space:pre;">Dec 8 6:07:10.096 PM</div>
<div style="position:absolute;left:705.00px;top:550.56px;line-height:24px;font-family:'Liberation Mono', monospace;font-size:12px;font-weight:400;color:#c8c9cc;white-space:pre;">SimpleLambda-rotel</div>
<div style="position:absolute;left:1025.00px;top:550.56px;line-height:24px;font-family:'Liberation Mono', monospace;font-size:12px;font-weight:400;color:#b8b9bc;white-space:pre;">INFO Starting Rotel.</div>
<div style="position:absolute;left:1304.0px;top:284px;width:10.4px;height:12px;box-sizing:border-box;background:#1b1c1f"></div>
<div style="position:absolute;left:1313.9px;top:284px;width:10.4px;height:12px;box-sizing:border-box;background:#2a2b2f"></div>
<div style="position:absolute;left:1323.8px;top:284px;width:10.4px;height:12px;box-sizing:border-box;background:#2c2d31"></div>
<div style="position:absolute;left:1333.7px;top:284px;width:10.4px;height:12px;box-sizing:border-box;background:#25262a"></div>
<div style="position:absolute;left:1343.6px;top:284px;width:10.4px;height:12px;box-sizing:border-box;background:#27282c"></div>
<div style="position:absolute;left:1353.4px;top:284px;width:10.4px;height:12px;box-sizing:border-box;background:#2a2b2e"></div>
<div style="position:absolute;left:1363.3px;top:284px;width:10.4px;height:12px;box-sizing:border-box;background:#26272b"></div>
<div style="position:absolute;left:1373.2px;top:284px;width:10.4px;height:12px;box-sizing:border-box;background:#2d2e32"></div>
<div style="position:absolute;left:1383.1px;top:284px;width:10.4px;height:12px;box-sizing:border-box;background:#28292d"></div>
<div style="position:absolute;left:1639.0px;top:281px;width:10.4px;height:16px;box-sizing:border-box;background:#1f2023"></div>
<div style="position:absolute;left:1648.9px;top:281px;width:10.4px;height:16px;box-sizing:border-box;background:#2a2b2f"></div>
<div style="position:absolute;left:1658.8px;top:281px;width:10.4px;height:16px;box-sizing:border-box;background:#232428"></div>
<div style="position:absolute;left:1668.7px;top:281px;width:10.4px;height:16px;box-sizing:border-box;background:#27282c"></div>
<div style="position:absolute;left:1678.6px;top:281px;width:10.4px;height:16px;box-sizing:border-box;background:#1f2021"></div>
<div style="position:absolute;left:1688.4px;top:281px;width:10.4px;height:16px;box-sizing:border-box;background:#26272b"></div>
<div style="position:absolute;left:1698.3px;top:281px;width:10.4px;height:16px;box-sizing:border-box;background:#2a2a2d"></div>
<div style="position:absolute;left:1708.2px;top:281px;width:10.4px;height:16px;box-sizing:border-box;background:#222327"></div>
<div style="position:absolute;left:1718.1px;top:281px;width:10.4px;height:16px;box-sizing:border-box;background:#26272a"></div>
<div style="position:absolute;left:1306.0px;top:329px;width:10.4px;height:13px;box-sizing:border-box;background:#15171a"></div>
<div style="position:absolute;left:1315.9px;top:329px;width:10.4px;height:13px;box-sizing:border-box;background:#2b2c30"></div>
<div style="position:absolute;left:1325.9px;top:329px;width:10.4px;height:13px;box-sizing:border-box;background:#25262a"></div>
<div style="position:absolute;left:1335.8px;top:329px;width:10.4px;height:13px;box-sizing:border-box;background:#28292d"></div>
<div style="position:absolute;left:1345.8px;top:329px;width:10.4px;height:13px;box-sizing:border-box;background:#232427"></div>
<div style="position:absolute;left:1355.7px;top:329px;width:10.4px;height:13px;box-sizing:border-box;background:#2a2b2f"></div>
<div style="position:absolute;left:1365.7px;top:329px;width:10.4px;height:13px;box-sizing:border-box;background:#26272b"></div>
<div style="position:absolute;left:1375.6px;top:329px;width:10.4px;height:13px;box-sizing:border-box;background:#2a2b2f"></div>
<div style="position:absolute;left:1385.6px;top:329px;width:10.4px;height:13px;box-sizing:border-box;background:#27282c"></div>
<div style="position:absolute;left:1644.0px;top:331px;width:8.4px;height:8px;box-sizing:border-box;background:#2e2f33"></div>
<div style="position:absolute;left:1651.9px;top:331px;width:8.4px;height:8px;box-sizing:border-box;background:#333438"></div>
<div style="position:absolute;left:1659.8px;top:331px;width:8.4px;height:8px;box-sizing:border-box;background:#2b2c30"></div>
<div style="position:absolute;left:1667.7px;top:331px;width:8.4px;height:8px;box-sizing:border-box;background:#1c1e22"></div>
<div style="position:absolute;left:1675.6px;top:331px;width:8.4px;height:8px;box-sizing:border-box;background:#2f3034"></div>
<div style="position:absolute;left:1683.5px;top:331px;width:8.4px;height:8px;box-sizing:border-box;background:#272a30"></div>
<div style="position:absolute;left:1691.4px;top:331px;width:8.4px;height:8px;box-sizing:border-box;background:#2f3033"></div>
<div style="position:absolute;left:1699.3px;top:331px;width:8.4px;height:8px;box-sizing:border-box;background:#2e3135"></div>
<div style="position:absolute;left:1707.2px;top:331px;width:8.4px;height:8px;box-sizing:border-box;background:#303135"></div>
<div style="position:absolute;left:1715.1px;top:331px;width:8.4px;height:8px;box-sizing:border-box;background:#333539"></div>
<div style="position:absolute;left:500px;top:589px;width:1418px;height:53px;box-sizing:border-box;background:#1b1c1f;border-radius:4px 0 0 4px"></div>
<div style="position:absolute;left:1154.00px;top:601.85px;line-height:26px;font-family:'Liberation Mono', monospace;font-size:13px;font-weight:400;color:#c8c9cc;white-space:pre;">End of Results</div>
</body></html>
